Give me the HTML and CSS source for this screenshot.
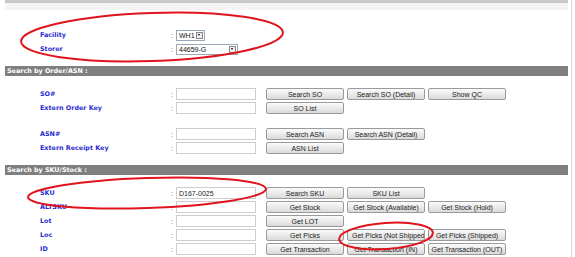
FILE: index.html
```html
<!DOCTYPE html>
<html lang="en">
<head>
  <meta charset="UTF-8" />
  <title>Inquiry</title>
  <link rel="stylesheet" href="styles.css">
</head>
<body>
  <div class="page">
    <div class="topline"></div>
    <div class="topfade"></div>

    <div class="head">
      <div class="row">
        <span class="lbl">Facility</span><span class="colon">:</span>
        <span class="pick small"><span class="val">WH1</span><span class="arrow"></span></span>
      </div>
      <div class="row">
        <span class="lbl">Storer</span><span class="colon">:</span>
        <span class="pick wide"><span class="val">44659-G</span><span class="arrow"></span></span>
      </div>
    </div>

    <div class="bar">Search by Order/ASN :</div>
    <div class="group">
      <div class="row">
        <span class="lbl">SO#</span><span class="colon">:</span><input class="field">
        <div class="btns"><button class="btn">Search SO</button><button class="btn">Search SO (Detail)</button><button class="btn">Show QC</button></div>
      </div>
      <div class="row">
        <span class="lbl">Extern Order Key</span><span class="colon">:</span><input class="field">
        <div class="btns"><button class="btn">SO List</button></div>
      </div>
      <div class="spacer"></div>
      <div class="row">
        <span class="lbl">ASN#</span><span class="colon">:</span><input class="field">
        <div class="btns"><button class="btn">Search ASN</button><button class="btn">Search ASN (Detail)</button></div>
      </div>
      <div class="row">
        <span class="lbl">Extern Receipt Key</span><span class="colon">:</span><input class="field">
        <div class="btns"><button class="btn">ASN List</button></div>
      </div>
    </div>

    <div class="bar">Search by SKU/Stock :</div>
    <div class="group">
      <div class="row">
        <span class="lbl">SKU</span><span class="colon">:</span><input class="field" value="D167-0025">
        <div class="btns"><button class="btn">Search SKU</button><button class="btn">SKU List</button></div>
      </div>
      <div class="row">
        <span class="lbl">ALTSKU</span><span class="colon">:</span><input class="field">
        <div class="btns"><button class="btn">Get Stock</button><button class="btn">Get Stock (Available)</button><button class="btn">Get Stock (Hold)</button></div>
      </div>
      <div class="row">
        <span class="lbl">Lot</span><span class="colon">:</span><input class="field">
        <div class="btns"><button class="btn">Get LOT</button></div>
      </div>
      <div class="row">
        <span class="lbl">Loc</span><span class="colon">:</span><input class="field">
        <div class="btns"><button class="btn">Get Picks</button><button class="btn clip">Get Picks (Not Shipped)</button><button class="btn">Get Picks (Shipped)</button></div>
      </div>
      <div class="row">
        <span class="lbl">ID</span><span class="colon">:</span><input class="field">
        <div class="btns"><button class="btn">Get Transaction</button><button class="btn">Get Transaction (IN)</button><button class="btn">Get Transaction (OUT)</button></div>
      </div>
    </div>
  </div>

  <!-- hand-drawn highlight marks on top of the form -->
  <svg class="marks" width="575" height="257" viewBox="0 0 575 257">
    <ellipse cx="152" cy="37" rx="131" ry="24" transform="rotate(-2 152 37)" />
    <ellipse cx="147" cy="193" rx="119" ry="15" transform="rotate(-2 147 193)" />
    <ellipse cx="386" cy="236" rx="47" ry="13" transform="rotate(-4 386 236)" />
  </svg>
</body>
</html>
```

FILE: styles.css
```css
body { margin: 0; background: #fff; font-family: "DejaVu Sans", Verdana, sans-serif; overflow: hidden; }
.page { width: 563px; padding: 0 3px 0 5px; border-right: 1px solid #d4d4d4; min-height: 257px; }
.topline { height: 3px; background: #c8c8c8; }
.topfade { height: 7px; background: #f4f4f4; }
.head { margin-top: 18px; margin-bottom: 10px; }
.row { display: grid; grid-template-columns: 131px 5px 90px 1fr; height: 14px; align-items: center; padding-left: 35px; }
.lbl { font-size: 6.4px; font-weight: bold; color: #2a2ad2; white-space: nowrap; }
.colon { font: 7px "Liberation Sans", Arial, sans-serif; color: #555; }
.field { width: 80px; height: 12px; box-sizing: border-box; border: 1px solid #cdcdcd; padding: 0 2px; margin: 0; font: 7px "Liberation Sans", Arial, sans-serif; color: #222; outline: none; }
.pick { display: flex; align-items: center; height: 11px; box-sizing: border-box; border: 1px solid #9aa8b8; background: #fff; font: 7px "Liberation Sans", Arial, sans-serif; color: #111; }
.pick.small { width: 29px; }
.pick.wide { width: 62px; }
.val { flex: 1; padding-left: 2px; }
.arrow { width: 7px; height: 7px; margin-right: 1px; box-sizing: border-box; border: 1px solid #888; background: #eee; position: relative; }
.arrow::after { content: ""; position: absolute; left: 1px; top: 1.5px; border-left: 1.5px solid transparent; border-right: 1.5px solid transparent; border-top: 2px solid #000; }
.btns { display: flex; gap: 3px; }
.btn { width: 78px; height: 12px; box-sizing: border-box; margin: 0; padding: 0; border: 1px solid #9a9a9a; border-radius: 2px; background: linear-gradient(#fbfbfb, #dadada); font: 7px "Liberation Sans", Arial, sans-serif; color: #222; overflow: hidden; white-space: nowrap; }
.btn.clip { text-align: left; padding-left: 4px; }
.bar { height: 10px; background: #7f7f7f; color: #fff; font-size: 6.4px; font-weight: bold; line-height: 10px; padding-left: 2px; white-space: nowrap; }
.group { margin: 11px 0 10px; }
.spacer { height: 12px; }
.marks { position: absolute; left: 0; top: 0; pointer-events: none; }
.marks ellipse { fill: none; stroke: #e0141c; stroke-width: 2; }
```
